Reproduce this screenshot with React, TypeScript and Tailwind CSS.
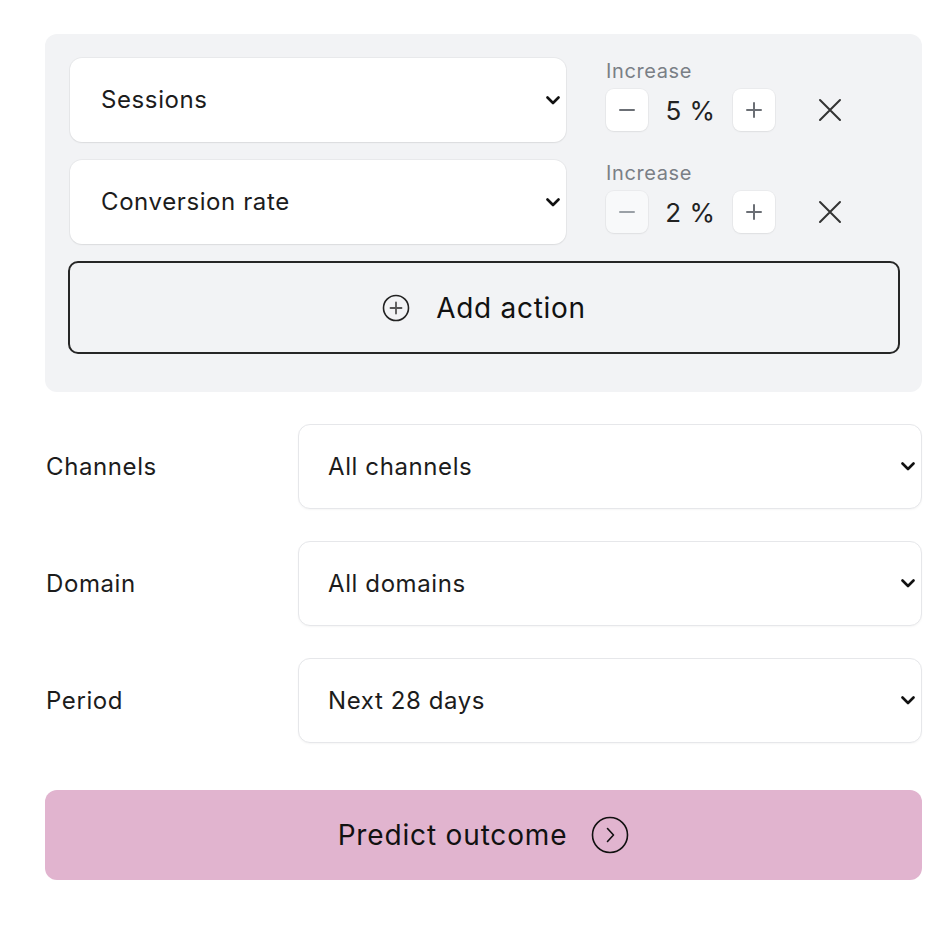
import React from "react";

const font = { fontFamily: "Inter, 'Noto Sans', sans-serif" };

function Chevron() {
  return (
    <svg width="14" height="9" viewBox="0 0 14 9" fill="none">
      <path d="M1.5 1.5L7 7L12.5 1.5" stroke="#111" strokeWidth="2.6" strokeLinecap="round" strokeLinejoin="round" />
    </svg>
  );
}

function PanelSelect({ value }: { value: string }) {
  return (
    <div className="flex h-[84px] w-[496px] items-center justify-between rounded-[12px] bg-white pl-[31px] pr-[6px] shadow-[0_0_0_1px_rgba(0,0,0,0.04),0_1px_2px_rgba(0,0,0,0.06)]">
      <span className="text-[24px] tracking-[0.025em] text-[#1c1c1c]">{value}</span>
      <Chevron />
    </div>
  );
}

function StepBtn({ kind, dim }: { kind: "minus" | "plus"; dim?: boolean }) {
  return (
    <div
      className={
        "flex h-[42px] w-[42px] items-center justify-center rounded-[8px] shadow-[0_0_0_1px_rgba(0,0,0,0.03),0_1px_2px_rgba(0,0,0,0.05)] " +
        (dim ? "bg-[#f8f9fa]" : "bg-white")
      }
    >
      <svg width="18" height="18" viewBox="0 0 18 18" fill="none">
        <path d="M2 9H16" stroke={dim ? "#9aa0a6" : "#6b6f75"} strokeWidth="2" strokeLinecap="round" />
        {kind === "plus" && <path d="M9 2V16" stroke="#6b6f75" strokeWidth="2" strokeLinecap="round" />}
      </svg>
    </div>
  );
}

function ActionRow({ metric, value, dim }: { metric: string; value: string; dim?: boolean }) {
  return (
    <div className="flex items-start">
      <PanelSelect value={metric} />
      <div className="ml-[40px] flex flex-col pt-[1px]">
        <span className="text-[20px] leading-[25px] tracking-[0.03em] text-[#7a7f86]">Increase</span>
        <div className="mt-[5px] flex items-center">
          <StepBtn kind="minus" dim={dim} />
          <span className="w-[85px] text-center text-[26px] tracking-[0.02em] text-[#222]">{value}</span>
          <StepBtn kind="plus" />
          <svg className="ml-[43px]" width="24" height="24" viewBox="0 0 24 24" fill="none">
            <path d="M2 2L22 22M22 2L2 22" stroke="#333" strokeWidth="2" strokeLinecap="round" />
          </svg>
        </div>
      </div>
    </div>
  );
}

function FormRow({ label, value }: { label: string; value: string }) {
  return (
    <div className="flex items-center">
      <span className="w-[252px] text-[24px] tracking-[0.025em] text-[#1c1c1c]">{label}</span>
      <div className="flex h-[85px] flex-1 items-center justify-between rounded-[12px] border border-[#e6e7ea] bg-white pl-[29px] pr-[6px] shadow-[0_1px_2px_rgba(0,0,0,0.04)]">
        <span className="text-[24px] tracking-[0.025em] text-[#1c1c1c]">{value}</span>
        <Chevron />
      </div>
    </div>
  );
}

export default function App() {
  return (
    <div className="min-h-[937px] w-[952px] bg-white pl-[45px] pt-[34px]" style={font}>
      <div className="w-[877px]">
        <div className="flex flex-col rounded-[12px] bg-[#f2f3f5] pb-[38px] pl-[25px] pr-[22px] pt-[24px]">
          <ActionRow metric="Sessions" value="5 %" />
          <div className="h-[18px]" />
          <ActionRow metric="Conversion rate" value="2 %" dim />
          <div className="mt-[17px] ml-[-2px] flex h-[93px] w-[832px] items-center justify-center gap-[26px] rounded-[10px] border-2 border-[#262626]">
            <svg width="28" height="28" viewBox="0 0 28 28" fill="none">
              <circle cx="14" cy="14" r="12.5" stroke="#222" strokeWidth="1.6" />
              <path d="M14 8.5V19.5M8.5 14H19.5" stroke="#555" strokeWidth="1.8" strokeLinecap="round" />
            </svg>
            <span className="text-[28px] tracking-[0.025em] text-[#111]">Add action</span>
          </div>
        </div>

        <div className="mt-[32px] flex flex-col gap-[32px] pl-[1px]">
          <FormRow label="Channels" value="All channels" />
          <FormRow label="Domain" value="All domains" />
          <FormRow label="Period" value="Next 28 days" />
        </div>

        <div className="mt-[47px] flex h-[90px] items-center justify-center gap-[24px] rounded-[12px] bg-[#e1b4cf]">
          <span className="text-[28px] tracking-[0.03em] text-[#111]">Predict outcome</span>
          <svg width="38" height="38" viewBox="0 0 38 38" fill="none">
            <circle cx="19" cy="19" r="17.5" stroke="#111" strokeWidth="1.6" />
            <path d="M16.5 12.5L22.5 19L16.5 25.5" stroke="#111" strokeWidth="1.6" strokeLinecap="round" strokeLinejoin="round" />
          </svg>
        </div>
      </div>
    </div>
  );
}
